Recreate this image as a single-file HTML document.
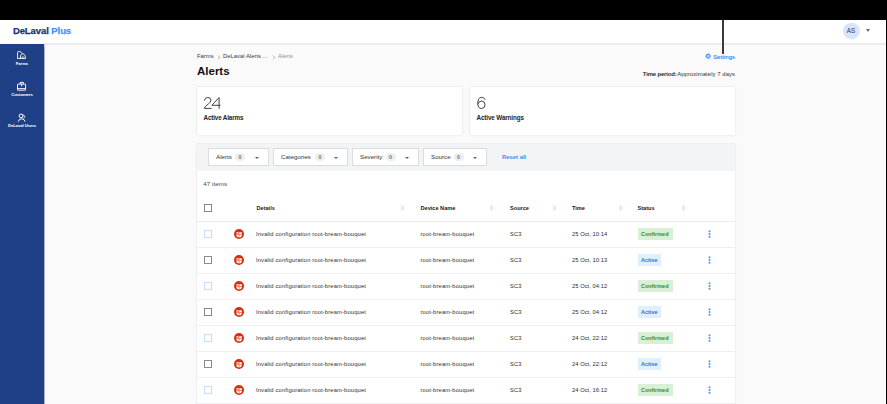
<!DOCTYPE html>
<html><head><meta charset="utf-8">
<style>
*{box-sizing:border-box;margin:0;padding:0}
html,body{width:887px;height:404px;overflow:hidden;background:#000;font-family:"Liberation Sans",sans-serif;color:#222}
.abs{position:absolute}
#hdr{left:0;top:20px;width:886px;height:23.5px;background:#fff;box-shadow:0 0.5px 1.5px rgba(0,0,0,.12)}
#logo{left:12.9px;top:24.7px;font-size:9.5px;font-weight:bold;color:#16367d;white-space:nowrap;letter-spacing:-0.08px;-webkit-text-stroke:0.25px currentColor}
#logo span{color:#4693f5}
#side{left:0;top:43.6px;width:44.4px;height:361px;background:#1f3f87;box-shadow:0.6px 0 1px rgba(20,40,90,.35)}
#main{left:44px;top:44px;width:842px;height:360px;background:#fafafa}
.navt{position:absolute;color:#fff;font-size:4.3px;font-weight:bold;text-align:center;width:44px;left:0;white-space:nowrap;letter-spacing:-0.12px}
.t{position:absolute;white-space:nowrap}
.card{position:absolute;background:#fff;box-shadow:0 0 2px rgba(0,0,0,.13)}
.fbtn{position:absolute;top:148px;height:18px;background:#fff;border:1px solid #dcdcdc}
.fbtn .lab{position:absolute;font-size:6.2px;color:#333;top:4.1px}
.fbtn .bd{position:absolute;top:3.8px;width:10px;height:8.6px;border-radius:4.3px;background:#eceef1;font-size:5.3px;color:#6e737b;text-align:center;line-height:8.6px;font-weight:bold}
.fbtn .ct{position:absolute;top:7.5px;width:0;height:0;border-left:2.2px solid transparent;border-right:2.2px solid transparent;border-top:2.6px solid #5f636a}
.hd{position:absolute;top:205px;font-size:5.6px;font-weight:bold;color:#222}
.sort{position:absolute;top:204.9px;width:5.2px;height:6px}
.row{position:absolute;left:197px;width:538px;height:26px;border-bottom:1px solid #eeeff1}
.cb{position:absolute;left:7.2px;top:8.2px;width:7.6px;height:7.6px;border:0.9px solid #878b93;border-radius:0}
.cb.l{border-color:#c6defd}
.ic svg{display:block}
.ic{position:absolute;left:36.6px;top:6.7px;width:10.2px;height:10.2px;border-radius:50%;background:#d8300f}
.cell{position:absolute;top:9px;font-size:5.8px;color:#2f2f2f;white-space:nowrap;letter-spacing:0.14px}
.badge{position:absolute;left:441px;top:6.2px;height:11.7px;font-size:5.5px;font-weight:bold;line-height:12.8px;padding:0 3px;overflow:hidden}
.conf{background:#d9f0d5;color:#3a8a3a;width:34.5px}
.act{background:#ddf0fc;color:#3b6fd4;width:23px}
.keb{position:absolute;left:511px;top:7.7px;width:3px;height:8.2px}
</style></head><body>
<div id="main" class="abs"></div>
<div id="hdr" class="abs"></div>
<div id="logo" class="abs">DeLaval <span>Plus</span></div>
<!-- avatar -->
<div class="abs" style="left:843px;top:22.5px;width:16.6px;height:16.6px;border-radius:50%;background:#d8e4fb"></div>
<div class="t" style="left:846.8px;top:27px;font-size:6.4px;color:#2f3a4d">AS</div>
<div class="abs" style="left:866px;top:29px;width:0;height:0;border-left:2.5px solid transparent;border-right:2.5px solid transparent;border-top:3px solid #6a6d73"></div>

<div class="abs" style="left:44px;top:43px;width:842px;height:1.6px;background:linear-gradient(#f3f3f3,#e6e6e6 50%,#f3f3f3)"></div>
<div id="side" class="abs"></div>

<!-- sidebar nav -->
<svg class="abs" style="left:0;top:0" width="44" height="130" viewBox="0 0 44 130" fill="none" stroke="#fff" stroke-width="1">
 <path d="M17.6 58.4V52.4Q17.6 51.6 18.4 51.6H20.1L22.3 53.5" stroke-width="0.9"/>
 <path d="M17.2 58.45H25.7" stroke-width="0.9"/>
 <path d="M20.5 58.4V55.5L22.9 53.5L25.3 55.5V58.4" stroke-width="0.9"/>
 <path d="M22 58.4V57.3Q22.9 55.7 23.8 57.3V58.4" stroke-width="0.7"/>
 <rect x="17.5" y="84.1" width="8.1" height="6.1" rx="0.4" stroke-width="0.95"/>
 <path d="M20.2 84V82.4H23.3V84"/>
 <path d="M17.5 88.6H25.6" stroke-width="0.95"/>
 <path d="M21.6 84V86.3" stroke-width="1.1"/>
 <circle cx="21" cy="115.9" r="1.9"/>
 <path d="M22.7 115.2A1.5 1.5 0 1 1 23.3 118.1" stroke-width="0.8"/>
 <path d="M18.4 121.6Q18.6 119 21.6 118.8Q24.8 119 25 121.6"/>
</svg>
<div class="navt" style="top:61px">Farms</div>
<div class="navt" style="top:92px">Customers</div>
<div class="navt" style="top:123px">DeLaval Users</div>

<!-- breadcrumb -->
<div class="t" style="left:197px;top:53px;font-size:5.9px;color:#3a3a3a">Farms</div>
<svg class="abs" style="left:216.5px;top:54.5px" width="4" height="5" viewBox="0 0 4 5" fill="none" stroke="#777" stroke-width="0.6"><path d="M1 0.6L2.8 2.4L1 4.2"/></svg>
<div class="t" style="left:223px;top:53px;font-size:5.9px;color:#3a3a3a">DeLaval Alerts ...</div>
<svg class="abs" style="left:271.5px;top:54.5px" width="4" height="5" viewBox="0 0 4 5" fill="none" stroke="#777" stroke-width="0.6"><path d="M1 0.6L2.8 2.4L1 4.2"/></svg>
<div class="t" style="left:278px;top:53px;font-size:5.9px;color:#8d929a">Alerts</div>
<div class="t" style="left:197px;top:65.4px;font-size:11.5px;font-weight:bold;color:#111">Alerts</div>

<!-- settings -->
<div class="abs" style="left:722px;top:20px;width:2px;height:33.7px;background:#3a3a3a"></div>
<svg class="abs" style="left:704.8px;top:53.4px" width="6.4" height="6.4" viewBox="0 0 6.4 6.4" fill="none" stroke="#3b8bf5"><circle cx="3.2" cy="3.2" r="1.9" stroke-width="1"/><circle cx="3.2" cy="3.2" r="0.6" stroke-width="0.5"/><path d="M3.2 0.3V1.3M3.2 5.1V6.1M0.3 3.2H1.3M5.1 3.2H6.1M1.15 1.15L1.85 1.85M4.55 4.55L5.25 5.25M1.15 5.25L1.85 4.55M4.55 1.85L5.25 1.15" stroke-width="0.8"/></svg>
<div class="t" style="left:713px;top:53.3px;font-size:6.1px;color:#2a7ef2;letter-spacing:0.02px;-webkit-text-stroke:0.1px currentColor">Settings</div>
<div class="t" style="left:642.8px;top:71.3px;font-size:5.9px;color:#2a2a2a;font-weight:bold;letter-spacing:-0.12px">Time period:</div><div class="t" style="left:677.2px;top:71.3px;font-size:5.9px;color:#333;letter-spacing:0.08px">Approximately 7 days</div>

<!-- cards -->
<div class="card" style="left:197px;top:87px;width:265px;height:48px"></div>
<div class="card" style="left:470px;top:87px;width:265px;height:48px"></div>
<svg class="abs" style="left:0;top:0" width="500" height="120" viewBox="0 0 500 120" fill="none" stroke="#2e2e2e" stroke-width="0.9" stroke-linecap="round" stroke-linejoin="round">
<path d="M204.5 100.3Q204.9 97.4 207.8 97.4Q210.9 97.4 210.9 100.3Q210.9 102.2 208.4 103.9Q204.6 106.4 204.4 108.4H211.3"/>
<path d="M219.1 108.4V97.5L211.9 105.3H220.1"/>
<path d="M485 99.4Q484.3 97.3 481.6 97.3Q477.8 97.3 477.8 103.5Q477.8 108.5 481.5 108.5Q485 108.5 485 104.7Q485 101 481.6 101Q478.5 101 477.9 104"/>
</svg>
<div class="t" style="left:203.5px;top:114px;font-size:6.3px;font-weight:bold;color:#222;letter-spacing:-0.15px">Active Alarms</div>

<div class="t" style="left:476.5px;top:114px;font-size:6.3px;font-weight:bold;color:#222;letter-spacing:-0.12px">Active Warnings</div>

<!-- table card -->
<div class="card" style="left:197px;top:144px;width:538px;height:270px"></div>
<div class="abs" style="left:197px;top:144px;width:538px;height:27px;background:#f3f4f6"></div>

<div class="fbtn" style="left:208px;width:61px"><span class="lab" style="left:7px">Alerts</span><span class="bd" style="left:26px">0</span><span class="ct" style="left:45.5px"></span></div>
<div class="fbtn" style="left:273px;width:75px"><span class="lab" style="left:7px">Categories</span><span class="bd" style="left:41px">0</span><span class="ct" style="left:60px"></span></div>
<div class="fbtn" style="left:352px;width:66.5px"><span class="lab" style="left:7px">Severity</span><span class="bd" style="left:32.5px">0</span><span class="ct" style="left:51.5px"></span></div>
<div class="fbtn" style="left:423px;width:63.5px"><span class="lab" style="left:7px">Source</span><span class="bd" style="left:29.5px">0</span><span class="ct" style="left:48.5px"></span></div>
<div class="t" style="left:502px;top:154px;font-size:5.9px;font-weight:bold;color:#3b8ef3">Reset all</div>

<div class="t" style="left:203.3px;top:179.9px;font-size:6.2px;color:#4a4a4a;letter-spacing:0.05px">47 items</div>

<!-- header row -->
<div class="abs" style="left:204px;top:204px;width:7.8px;height:7.8px;border:0.9px solid #878b93;border-radius:0"></div>
<div class="hd" style="left:256.5px">Details</div>
<div class="hd" style="left:420.5px">Device Name</div>
<div class="hd" style="left:510px">Source</div>
<div class="hd" style="left:572px">Time</div>
<div class="hd" style="left:637.5px">Status</div>
<div class="abs" style="left:197px;top:221px;width:538px;height:1px;background:#ececec"></div>
<svg class="sort" style="left:399.7px" viewBox="0 0 5 6"><path d="M2.5 0.3L4.6 2.6H0.4Z M2.5 5.7L4.6 3.4H0.4Z" fill="#dcdde0"/></svg>
<svg class="sort" style="left:489.3px" viewBox="0 0 5 6"><path d="M2.5 0.3L4.6 2.6H0.4Z M2.5 5.7L4.6 3.4H0.4Z" fill="#dcdde0"/></svg>
<svg class="sort" style="left:551.7px" viewBox="0 0 5 6"><path d="M2.5 0.3L4.6 2.6H0.4Z M2.5 5.7L4.6 3.4H0.4Z" fill="#dcdde0"/></svg>
<svg class="sort" style="left:617.8px" viewBox="0 0 5 6"><path d="M2.5 0.3L4.6 2.6H0.4Z M2.5 5.7L4.6 3.4H0.4Z" fill="#dcdde0"/></svg>
<svg class="sort" style="left:680.9px" viewBox="0 0 5 6"><path d="M2.5 0.3L4.6 2.6H0.4Z M2.5 5.7L4.6 3.4H0.4Z" fill="#dcdde0"/></svg>
<div class="row" style="top:222px"><span class="cb l"></span><span class="ic"><svg width="10.2" height="10.2" viewBox="0 0 10.2 10.2"><path d="M2.4 3.2H7.8V5.9Q7.8 8.3 5.1 8.3Q2.4 8.3 2.4 5.9Z" fill="#fff"/><path d="M2.2 4.4H4.8M4.95 3V5.6M2.2 5.6H8" stroke="#d8300f" stroke-width="0.55" fill="none"/><circle cx="5.1" cy="6.8" r="0.6" fill="#d8300f"/></svg></span><span class="cell" style="left:59px">Invalid configuration root-bream-bouquet</span><span class="cell" style="left:223.5px">root-bream-bouquet</span><span class="cell" style="left:313px">SC3</span><span class="cell" style="left:375px;letter-spacing:0.03px">25 Oct, 10:14</span><span class="badge conf">Confirmed</span><svg class="keb" viewBox="0 0 3 8.2"><circle cx="1.5" cy="1.35" r="1.1" fill="#5a9ff2"/><circle cx="1.5" cy="4.1" r="1.1" fill="#5a9ff2"/><circle cx="1.5" cy="6.85" r="1.1" fill="#5a9ff2"/></svg></div>
<div class="row" style="top:248px"><span class="cb"></span><span class="ic"><svg width="10.2" height="10.2" viewBox="0 0 10.2 10.2"><path d="M2.4 3.2H7.8V5.9Q7.8 8.3 5.1 8.3Q2.4 8.3 2.4 5.9Z" fill="#fff"/><path d="M2.2 4.4H4.8M4.95 3V5.6M2.2 5.6H8" stroke="#d8300f" stroke-width="0.55" fill="none"/><circle cx="5.1" cy="6.8" r="0.6" fill="#d8300f"/></svg></span><span class="cell" style="left:59px">Invalid configuration root-bream-bouquet</span><span class="cell" style="left:223.5px">root-bream-bouquet</span><span class="cell" style="left:313px">SC3</span><span class="cell" style="left:375px;letter-spacing:0.03px">25 Oct, 10:13</span><span class="badge act">Active</span><svg class="keb" viewBox="0 0 3 8.2"><circle cx="1.5" cy="1.35" r="1.1" fill="#5a9ff2"/><circle cx="1.5" cy="4.1" r="1.1" fill="#5a9ff2"/><circle cx="1.5" cy="6.85" r="1.1" fill="#5a9ff2"/></svg></div>
<div class="row" style="top:274px"><span class="cb l"></span><span class="ic"><svg width="10.2" height="10.2" viewBox="0 0 10.2 10.2"><path d="M2.4 3.2H7.8V5.9Q7.8 8.3 5.1 8.3Q2.4 8.3 2.4 5.9Z" fill="#fff"/><path d="M2.2 4.4H4.8M4.95 3V5.6M2.2 5.6H8" stroke="#d8300f" stroke-width="0.55" fill="none"/><circle cx="5.1" cy="6.8" r="0.6" fill="#d8300f"/></svg></span><span class="cell" style="left:59px">Invalid configuration root-bream-bouquet</span><span class="cell" style="left:223.5px">root-bream-bouquet</span><span class="cell" style="left:313px">SC3</span><span class="cell" style="left:375px;letter-spacing:0.03px">25 Oct, 04:12</span><span class="badge conf">Confirmed</span><svg class="keb" viewBox="0 0 3 8.2"><circle cx="1.5" cy="1.35" r="1.1" fill="#5a9ff2"/><circle cx="1.5" cy="4.1" r="1.1" fill="#5a9ff2"/><circle cx="1.5" cy="6.85" r="1.1" fill="#5a9ff2"/></svg></div>
<div class="row" style="top:300px"><span class="cb"></span><span class="ic"><svg width="10.2" height="10.2" viewBox="0 0 10.2 10.2"><path d="M2.4 3.2H7.8V5.9Q7.8 8.3 5.1 8.3Q2.4 8.3 2.4 5.9Z" fill="#fff"/><path d="M2.2 4.4H4.8M4.95 3V5.6M2.2 5.6H8" stroke="#d8300f" stroke-width="0.55" fill="none"/><circle cx="5.1" cy="6.8" r="0.6" fill="#d8300f"/></svg></span><span class="cell" style="left:59px">Invalid configuration root-bream-bouquet</span><span class="cell" style="left:223.5px">root-bream-bouquet</span><span class="cell" style="left:313px">SC3</span><span class="cell" style="left:375px;letter-spacing:0.03px">25 Oct, 04:12</span><span class="badge act">Active</span><svg class="keb" viewBox="0 0 3 8.2"><circle cx="1.5" cy="1.35" r="1.1" fill="#5a9ff2"/><circle cx="1.5" cy="4.1" r="1.1" fill="#5a9ff2"/><circle cx="1.5" cy="6.85" r="1.1" fill="#5a9ff2"/></svg></div>
<div class="row" style="top:326px"><span class="cb l"></span><span class="ic"><svg width="10.2" height="10.2" viewBox="0 0 10.2 10.2"><path d="M2.4 3.2H7.8V5.9Q7.8 8.3 5.1 8.3Q2.4 8.3 2.4 5.9Z" fill="#fff"/><path d="M2.2 4.4H4.8M4.95 3V5.6M2.2 5.6H8" stroke="#d8300f" stroke-width="0.55" fill="none"/><circle cx="5.1" cy="6.8" r="0.6" fill="#d8300f"/></svg></span><span class="cell" style="left:59px">Invalid configuration root-bream-bouquet</span><span class="cell" style="left:223.5px">root-bream-bouquet</span><span class="cell" style="left:313px">SC3</span><span class="cell" style="left:375px;letter-spacing:0.03px">24 Oct, 22:12</span><span class="badge conf">Confirmed</span><svg class="keb" viewBox="0 0 3 8.2"><circle cx="1.5" cy="1.35" r="1.1" fill="#5a9ff2"/><circle cx="1.5" cy="4.1" r="1.1" fill="#5a9ff2"/><circle cx="1.5" cy="6.85" r="1.1" fill="#5a9ff2"/></svg></div>
<div class="row" style="top:352px"><span class="cb"></span><span class="ic"><svg width="10.2" height="10.2" viewBox="0 0 10.2 10.2"><path d="M2.4 3.2H7.8V5.9Q7.8 8.3 5.1 8.3Q2.4 8.3 2.4 5.9Z" fill="#fff"/><path d="M2.2 4.4H4.8M4.95 3V5.6M2.2 5.6H8" stroke="#d8300f" stroke-width="0.55" fill="none"/><circle cx="5.1" cy="6.8" r="0.6" fill="#d8300f"/></svg></span><span class="cell" style="left:59px">Invalid configuration root-bream-bouquet</span><span class="cell" style="left:223.5px">root-bream-bouquet</span><span class="cell" style="left:313px">SC3</span><span class="cell" style="left:375px;letter-spacing:0.03px">24 Oct, 22:12</span><span class="badge act">Active</span><svg class="keb" viewBox="0 0 3 8.2"><circle cx="1.5" cy="1.35" r="1.1" fill="#5a9ff2"/><circle cx="1.5" cy="4.1" r="1.1" fill="#5a9ff2"/><circle cx="1.5" cy="6.85" r="1.1" fill="#5a9ff2"/></svg></div>
<div class="row" style="top:378px"><span class="cb l"></span><span class="ic"><svg width="10.2" height="10.2" viewBox="0 0 10.2 10.2"><path d="M2.4 3.2H7.8V5.9Q7.8 8.3 5.1 8.3Q2.4 8.3 2.4 5.9Z" fill="#fff"/><path d="M2.2 4.4H4.8M4.95 3V5.6M2.2 5.6H8" stroke="#d8300f" stroke-width="0.55" fill="none"/><circle cx="5.1" cy="6.8" r="0.6" fill="#d8300f"/></svg></span><span class="cell" style="left:59px">Invalid configuration root-bream-bouquet</span><span class="cell" style="left:223.5px">root-bream-bouquet</span><span class="cell" style="left:313px">SC3</span><span class="cell" style="left:375px;letter-spacing:0.03px">24 Oct, 16:12</span><span class="badge conf">Confirmed</span><svg class="keb" viewBox="0 0 3 8.2"><circle cx="1.5" cy="1.35" r="1.1" fill="#5a9ff2"/><circle cx="1.5" cy="4.1" r="1.1" fill="#5a9ff2"/><circle cx="1.5" cy="6.85" r="1.1" fill="#5a9ff2"/></svg></div>
<div class="abs" style="left:886px;top:0;width:1px;height:404px;background:#000"></div>
</body></html>
